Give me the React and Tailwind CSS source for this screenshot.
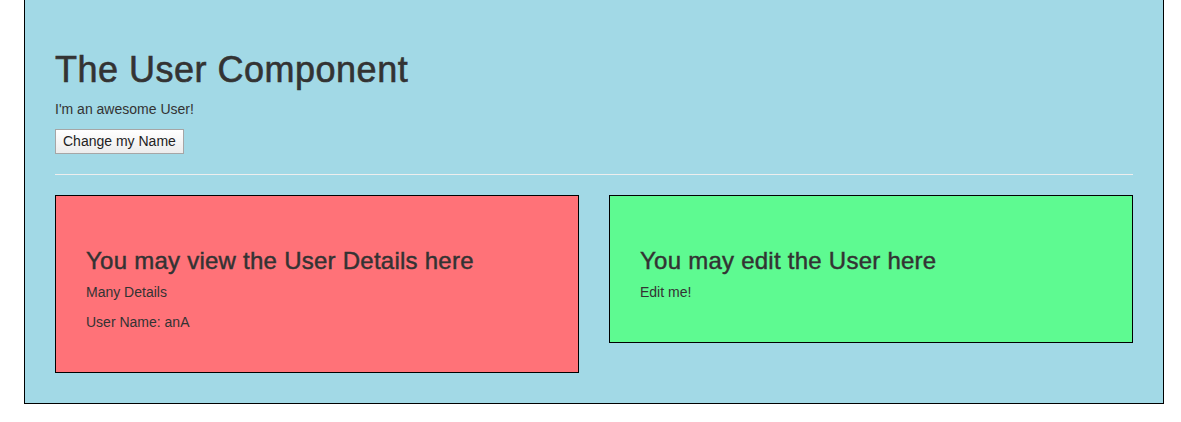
import React from "react";

const UserDetail = ({ name }) => (
  <div className="border border-black bg-[#ff7278] p-[30px]">
    <h3 className="mt-[22px] mb-[8px] text-[24px] leading-[26.4px] tracking-[0.25px] [-webkit-text-stroke:0.45px_#333]">
      You may view the User Details here
    </h3>
    <p className="mb-[10px]">Many Details</p>
    <p className="mb-[10px]">User Name: {name}</p>
  </div>
);

const UserEdit = () => (
  <div className="border border-black bg-[#5efa91] p-[30px]">
    <h3 className="mt-[22px] mb-[8px] text-[24px] leading-[26.4px] tracking-[0.25px] [-webkit-text-stroke:0.45px_#333]">
      You may edit the User here
    </h3>
    <p className="mb-[10px]">Edit me!</p>
  </div>
);

export default function App() {
  return (
    <div className="min-h-screen bg-white font-['Liberation_Sans',Arial,sans-serif] text-[14px] leading-[20px] text-[#333]">
      <div className="ml-[24px] w-[1140px] border-x border-b border-black bg-[#a2d9e6] px-[30px] pt-[30px] pb-[30px]">
        <h1 className="mt-[20px] mb-[10px] text-[36px] leading-[39px] tracking-[0.5px] [-webkit-text-stroke:0.6px_#333]">
          The User Component
        </h1>
        <p className="mb-[10px]">I'm an awesome User!</p>
        <button className="block h-[25px] border border-[#a6a6a6] bg-gradient-to-b from-white to-[#ececec] px-[7px] text-[14px] leading-[17px] text-[#222]">
          Change my Name
        </button>
        <hr className="my-[20px] border-t border-[#eeeeee]" />
        <div className="grid grid-cols-2 items-start gap-[30px]">
          <UserDetail name="anA" />
          <UserEdit />
        </div>
      </div>
    </div>
  );
}
